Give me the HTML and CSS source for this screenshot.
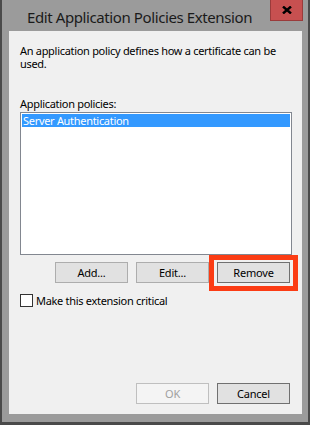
FILE: index.html
```html
<!DOCTYPE html>
<html lang="en">

<head>
    <meta charset="UTF-8">
    <meta name="viewport" content="width=device-width, initial-scale=1.0">
    <title>Edit Application Policies Extension</title>
    <link rel="stylesheet" href="styles.css">
</head>

<body>
    <div class="window">
        <div class="title-bar">
            <span class="title">Edit Application Policies Extension</span>
            <button class="close-btn" aria-label="Close">
                <svg width="10" height="8" viewBox="0 0 10 8">
                    <path d="M1 0.5 L9 7.5 M9 0.5 L1 7.5" stroke="#000" stroke-width="2.4" fill="none"/>
                </svg>
            </button>
        </div>

        <div class="client">
            <p class="desc">An application policy defines how a certificate can be used.</p>

            <label class="list-label">Application policies:</label>
            <div class="listbox">
                <div class="list-item selected">Server Authentication</div>
            </div>

            <div class="btn-row">
                <button class="btn">Add...</button>
                <button class="btn">Edit...</button>
                <div class="highlight-wrap">
                    <button class="btn btn-dark">Remove</button>
                    <span class="highlight"></span>
                </div>
            </div>

            <label class="check-row">
                <span class="checkbox"></span>
                Make this extension critical
            </label>

            <div class="btn-row bottom">
                <button class="btn" disabled>OK</button>
                <button class="btn btn-dark">Cancel</button>
            </div>
        </div>
    </div>
</body>

</html>
```

FILE: styles.css
```css
body {
    margin: 0;
    font-family: "Noto Sans", "Open Sans", sans-serif;
    font-size: 11px;
    letter-spacing: -0.3px;
    color: #000;
    background-color: #fff;
}

.window {
    width: 310px;
    height: 425px;
    box-sizing: border-box;
    display: flex;
    flex-direction: column;
    background-color: #9b9b9b;
    border: solid #4a4a4a;
    border-width: 0 2px 3px 2px;
    padding: 0 6px 8px 7px;
}

/* title bar */
.title-bar {
    height: 31px;
    display: flex;
    align-items: flex-start;
}

.title {
    flex: 1;
    text-align: center;
    font-size: 15px;
    letter-spacing: -0.4px;
    line-height: 20px;
    padding-top: 7px;
    color: #1a1a1a;
}

.close-btn {
    width: 33px;
    height: 21px;
    margin-right: -1px;
    padding: 0;
    border: 1px solid #9a3b3b;
    border-top: none;
    background-color: #c75050;
    display: flex;
    align-items: center;
    justify-content: center;
}

/* client area */
.client {
    flex: 1;
    display: flex;
    flex-direction: column;
    background-color: #f0f0f0;
    padding: 13px 10px 10px 11px;
    line-height: 13px;
}

.desc {
    margin: 0;
}

.list-label {
    margin-top: 27px;
    margin-bottom: 2px;
}

.listbox {
    height: 143px;
    box-sizing: border-box;
    border: 1px solid #828790;
    background-color: #fff;
    padding: 1px;
}

.list-item {
    height: 13px;
    padding-left: 1px;
    line-height: 13px;
}

.list-item.selected {
    background-color: #3399ff;
    color: #fff;
}

/* buttons */
.btn-row {
    display: flex;
    justify-content: flex-end;
    gap: 8px;
    margin-top: 7px;
    padding-right: 2px;
}

.btn {
    width: 73px;
    height: 21px;
    box-sizing: border-box;
    padding: 0;
    border: 1px solid #adadad;
    background-color: #e1e1e1;
    font-family: inherit;
    font-size: 11px;
    letter-spacing: -0.2px;
    color: #000;
}

.btn-dark {
    border-color: #707070;
}

.btn:disabled {
    background-color: #f4f4f4;
    border-color: #bfbfbf;
    color: #a0a0a0;
}

.highlight-wrap {
    position: relative;
    display: flex;
}

/* red annotation frame */
.highlight {
    position: absolute;
    left: -8px;
    top: -7px;
    right: -8px;
    bottom: -8px;
    border: 5px solid #fb3c14;
}

.check-row {
    display: flex;
    align-items: center;
    gap: 3px;
    margin-top: 11px;
}

.checkbox {
    width: 13px;
    height: 13px;
    box-sizing: border-box;
    border: 1px solid #333;
    background-color: #fff;
}

.btn-row.bottom {
    margin-top: auto;
}
```
